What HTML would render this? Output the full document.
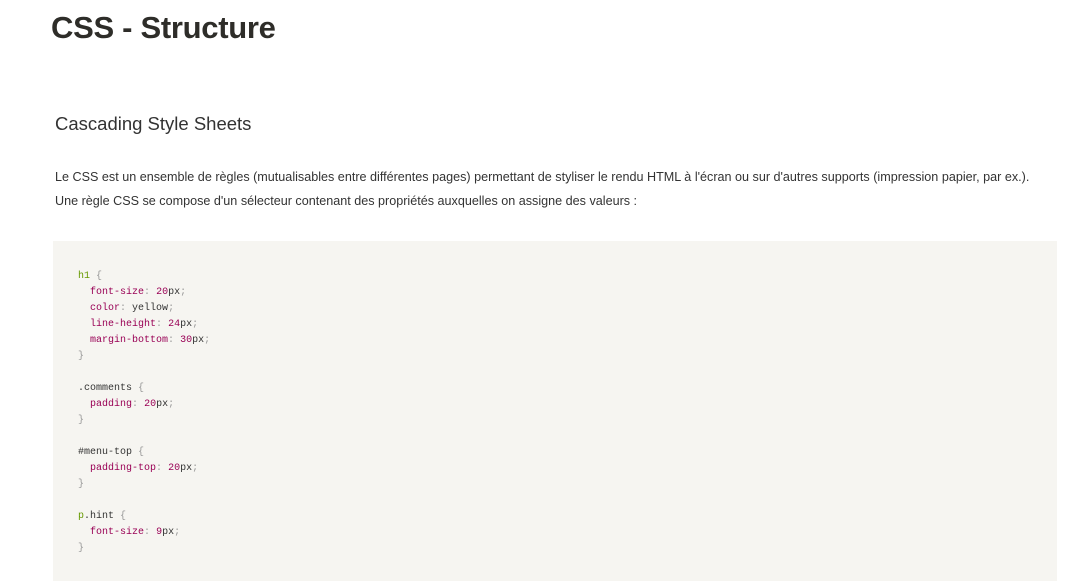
<!DOCTYPE html>
<html><head><meta charset="utf-8"><style>
body{margin:0;background:#fff;width:1072px;height:571px;overflow:hidden;font-family:"Liberation Sans",sans-serif;color:#333}
h1{position:absolute;left:51px;top:10px;margin:0;font-size:31px;font-weight:bold;color:#2e2d29;letter-spacing:-0.3px}
h2{position:absolute;left:55px;top:113px;margin:0;font-size:18.5px;font-weight:normal;color:#333}
p{position:absolute;left:55px;top:165px;margin:0;font-size:12.6px;line-height:24px;color:#333;white-space:nowrap}
pre{position:absolute;left:53px;top:241px;width:1004px;height:340px;margin:0;background:#f6f5f1;font-family:"Liberation Mono",monospace;font-size:10px;line-height:16px;padding:28px 0 0 25px;box-sizing:border-box;color:#333}
.s{color:#669900}.p{color:#990055}.n{color:#990055}.g{color:#999}
</style></head><body>
<h1>CSS - Structure</h1>
<h2>Cascading Style Sheets</h2>
<p>Le CSS est un ensemble de règles (mutualisables entre différentes pages) permettant de styliser le rendu HTML à l'écran ou sur d'autres supports (impression papier, par ex.).<br>Une règle CSS se compose d'un sélecteur contenant des propriétés auxquelles on assigne des valeurs :</p>
<pre><span class="s">h1</span> <span class="g">{</span>
  <span class="p">font-size</span><span class="g">:</span> <span class="n">20</span>px<span class="g">;</span>
  <span class="p">color</span><span class="g">:</span> yellow<span class="g">;</span>
  <span class="p">line-height</span><span class="g">:</span> <span class="n">24</span>px<span class="g">;</span>
  <span class="p">margin-bottom</span><span class="g">:</span> <span class="n">30</span>px<span class="g">;</span>
<span class="g">}</span>

.comments <span class="g">{</span>
  <span class="p">padding</span><span class="g">:</span> <span class="n">20</span>px<span class="g">;</span>
<span class="g">}</span>

#menu-top <span class="g">{</span>
  <span class="p">padding-top</span><span class="g">:</span> <span class="n">20</span>px<span class="g">;</span>
<span class="g">}</span>

<span class="s">p</span>.hint <span class="g">{</span>
  <span class="p">font-size</span><span class="g">:</span> <span class="n">9</span>px<span class="g">;</span>
<span class="g">}</span></pre>
</body></html>
